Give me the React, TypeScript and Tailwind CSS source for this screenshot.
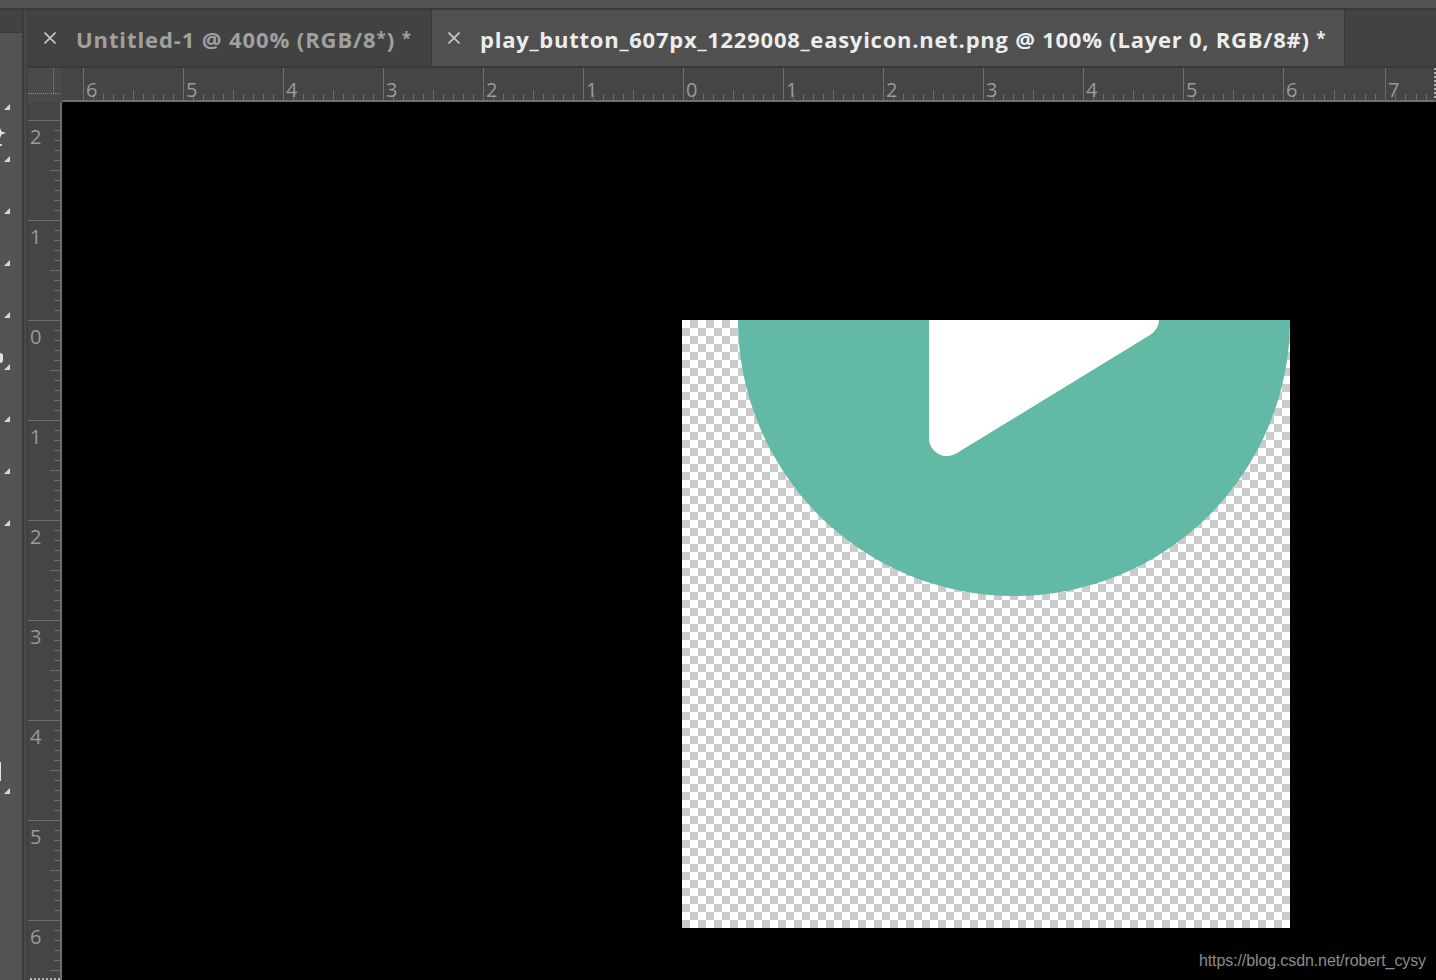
const tabFont = { fontFamily: '"Open Sans", "Noto Sans", sans-serif' }

const toolTriangles = [104, 156, 208, 260, 312, 364, 416, 468, 520, 788]

// the last stretch of the ruler runs a touch wider in the reference
function stretch(x: number) {
  return x > 1221 ? Math.round(x + (x - 1221) * 0.02) : x
}

function HorizontalRuler() {
  const ticks: React.ReactNode[] = []
  // x=0 in this svg sits at page x=62; zero of the ruler is at page x=683
  for (let x = 21; x < 1374; x += 10) {
    const i = (x - 21) / 10
    const h = i % 10 === 0 ? 32 : i % 5 === 0 ? 10 : 6
    ticks.push(<rect key={x} x={stretch(x)} y={32 - h} width={1} height={h} fill="#6e6e6e" />)
  }
  const labels = [6, 5, 4, 3, 2, 1, 0, 1, 2, 3, 4, 5, 6, 7]
  return (
    <svg width={1374} height={34} className="block">
      {ticks}
      <rect x={0} y={32} width={1374} height={2} fill="#6e6e6e" />
      {labels.map((n, i) => (
        <text key={i} x={stretch(21 + i * 100) + 3} y={29} fontSize={20} fill="#9a9a9a" fontFamily="'Open Sans', sans-serif">
          {n}
        </text>
      ))}
      <line x1={1373} y1={0} x2={1373} y2={32} stroke="#b0b0b0" strokeWidth={2} strokeDasharray="2 2" />
    </svg>
  )
}

function VerticalRuler() {
  const ticks: React.ReactNode[] = []
  // y=0 in this svg sits at page y=102; zero of the ruler is at page y=320
  for (let y = 18; y < 878; y += 10) {
    const i = (y - 18) / 10
    const w = i % 10 === 0 ? 32 : i % 5 === 0 ? 10 : 6
    ticks.push(<rect key={y} x={32 - w} y={y} width={w} height={1} fill="#6e6e6e" />)
  }
  const labels = [2, 1, 0, 1, 2, 3, 4, 5, 6]
  return (
    <svg width={34} height={878} className="block">
      {ticks}
      <rect x={32} y={0} width={2} height={878} fill="#6e6e6e" />
      {labels.map((n, i) => (
        <text key={i} x={2} y={42 + i * 100} fontSize={20} fill="#9a9a9a" fontFamily="'Open Sans', sans-serif">
          {n}
        </text>
      ))}
      <line x1={2} y1={877} x2={32} y2={877} stroke="#b5b5b5" strokeWidth={2} strokeDasharray="2 2" />
    </svg>
  )
}

function CanvasImage() {
  return (
    <svg width={608} height={608} className="block">
      <defs>
        <pattern id="checker" width={16} height={16} patternUnits="userSpaceOnUse">
          <rect width={16} height={16} fill="#ffffff" />
          <rect x={8} y={0} width={8} height={8} fill="#cccccc" />
          <rect x={0} y={8} width={8} height={8} fill="#cccccc" />
        </pattern>
      </defs>
      <rect width={608} height={608} fill="url(#checker)" />
      <circle cx={332} cy={0} r={276} fill="#61b9a6" />
      <path d="M247 0H477Q477 9 468 15L275 133A18 18 0 0 1 247 118Z" fill="#ffffff" />
    </svg>
  )
}

function CloseIcon({ color }: { color: string }) {
  return (
    <svg width={12} height={12} viewBox="0 0 12 12" className="block">
      <path d="M0.5 0.5L11.5 11.5M11.5 0.5L0.5 11.5" stroke={color} strokeWidth={1.6} fill="none" />
    </svg>
  )
}

function Star() {
  return <span className="text-[17px] align-[3px]">*</span>
}

function Toolbar() {
  return (
    <div className="relative w-[22px] h-full shrink-0 bg-[#535353]">
      <div className="h-[23px] bg-[#424242] border-b border-[#3a3a3a]" />
      {toolTriangles.map((y) => (
        <div
          key={y}
          className="absolute left-[4px] w-0 h-0 border-l-[6px] border-l-transparent border-b-[6px] border-b-[#d8d8d8]"
          style={{ top: y - 10 }}
        />
      ))}
      {/* clipped tool icons at the window edge */}
      <svg width={7} height={22} viewBox="0 0 7 22" className="absolute left-0 top-[116px]">
        <path d="M0 2L1.5 5.5L6 7L1.5 8.5L0 12Z" fill="#e6e6e6" />
        <rect x={0} y={18} width={2} height={2} fill="#d0d0d0" />
      </svg>
      <div className="absolute left-0 top-[343px] w-[3px] h-[10px] bg-[#e0e0e0] rounded-r-full" />
      <div className="absolute left-0 top-[752px] w-[1px] h-[19px] bg-[#e0e0e0]" />
    </div>
  )
}

export default function App() {
  return (
    <div className="w-[1436px] h-[980px] overflow-hidden flex flex-col bg-[#535353]">
      <div className="h-2 shrink-0 bg-[#535353]" />
      <div className="h-[2px] shrink-0 bg-[#3a3a3a]" />

      <div className="flex flex-1 min-h-0">
        <Toolbar />
        <div className="w-[2px] shrink-0 bg-[#3b3b3b]" />
        <div className="w-[3px] shrink-0 bg-[#484848]" />
        <div className="w-[1px] shrink-0 bg-[#3b3b3b]" />

        <div className="flex-1 flex flex-col min-w-0">
          {/* Tabs */}
          <div className="h-[58px] shrink-0 flex bg-[#424242] border-b-2 border-[#3a3a3a]" style={tabFont}>
            <div className="w-[403px] shrink-0 flex items-center pl-[16px] text-[#a0a0a0]">
              <div className="w-[32px] shrink-0">
                <CloseIcon color="#c4c4c4" />
              </div>
              <span className="text-[22px] font-bold tracking-[0.9px] whitespace-nowrap pt-[3px]">
                Untitled-1 @ 400% (RGB/8<Star />) <Star />
              </span>
            </div>
            <div className="w-px shrink-0 bg-[#3a3a3a]" />
            <div className="w-[913px] shrink-0 flex items-center pl-[16px] bg-[#505050] border-r border-[#3a3a3a] text-[#ececec]">
              <div className="w-[32px] shrink-0">
                <CloseIcon color="#c8c8c8" />
              </div>
              <span className="text-[22px] font-bold tracking-[0.76px] whitespace-nowrap pt-[3px]">
                play_button_607px_1229008_easyicon.net.png @ 100% (Layer 0, RGB/8#) <Star />
              </span>
            </div>
          </div>

          {/* Ruler row */}
          <div className="flex h-[34px] shrink-0 bg-[#454545]">
            <div className="relative w-[34px] shrink-0 bg-[#4a4a4a]">
              <div className="absolute left-[25px] top-0 h-[25px] border-l border-dotted border-[#8a8a8a]" />
              <div className="absolute left-0 top-[25px] w-[32px] border-t border-dotted border-[#8a8a8a]" />
            </div>
            <HorizontalRuler />
          </div>

          <div className="flex flex-1 min-h-0">
            <div className="w-[34px] shrink-0 bg-[#454545]">
              <VerticalRuler />
            </div>
            {/* Document area */}
            <div className="relative flex-1 bg-black pl-[620px] pt-[218px]">
              <CanvasImage />
              <span
                className="absolute right-[10px] bottom-[9px] text-[16px] leading-[20px] tracking-[-0.1px] text-[#8c8c8c] whitespace-nowrap"
                style={{ fontFamily: '"Liberation Sans", Arial, sans-serif' }}
              >
                https://blog.csdn.net/robert_cysy
              </span>
            </div>
          </div>
        </div>
      </div>
    </div>
  )
}
